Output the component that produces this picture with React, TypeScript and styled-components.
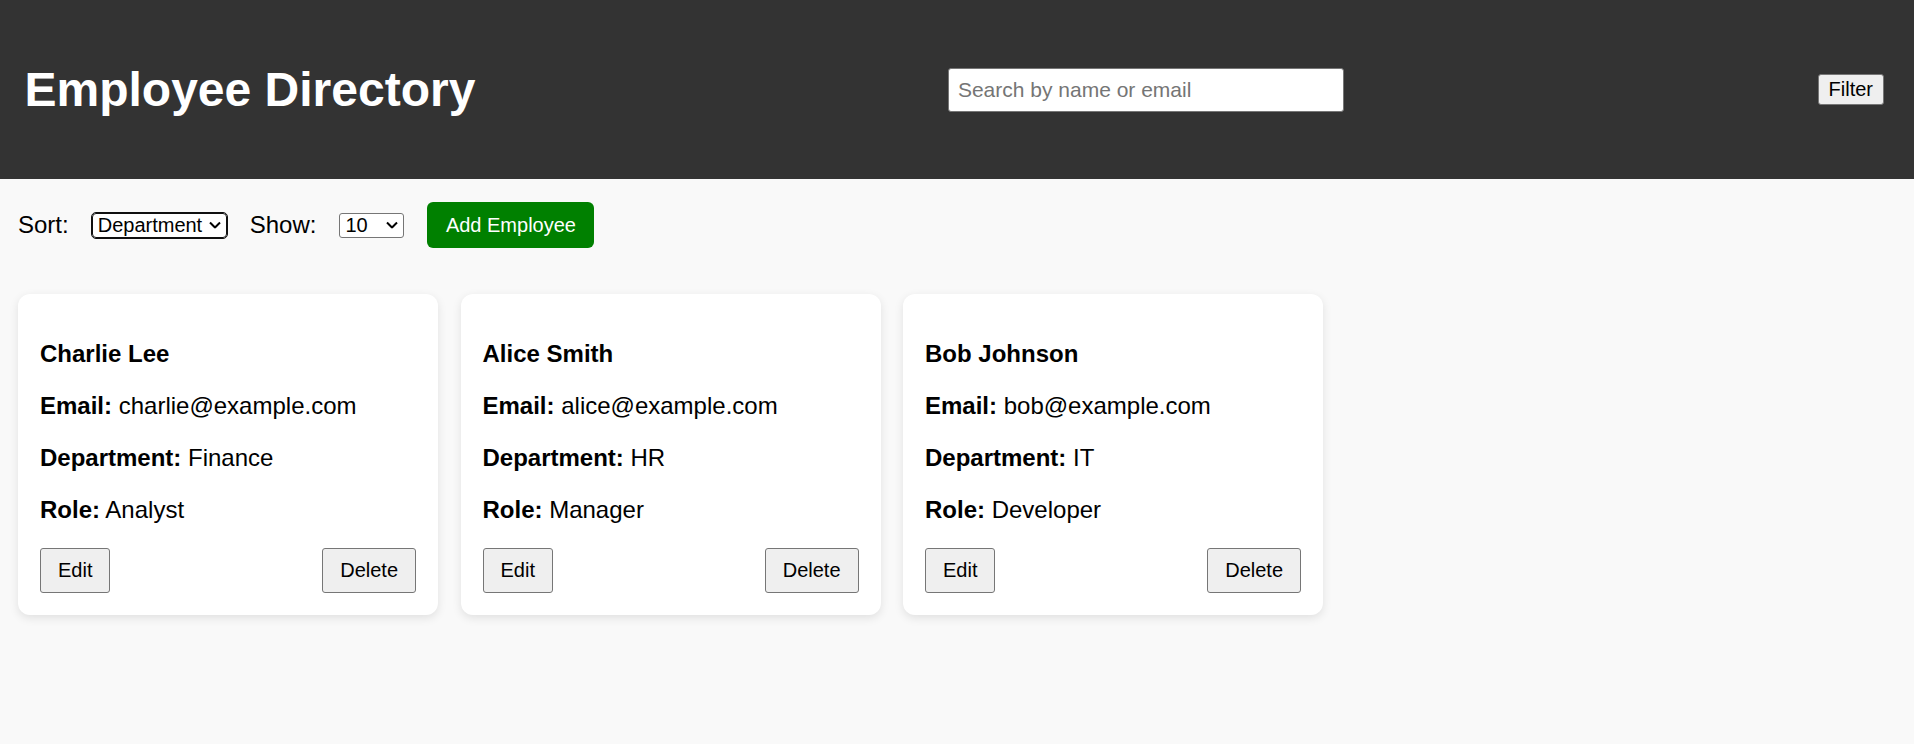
import React from "react";
import styled, { createGlobalStyle, css } from "styled-components";

const GlobalStyle = createGlobalStyle`
  html, body {
    margin: 0;
    padding: 0;
    background: #f9f9f9;
    font-family: "Liberation Sans", Arial, sans-serif;
    color: #000;
  }
`;

const Header = styled.header`
  display: flex;
  justify-content: space-between;
  align-items: center;
  background: #333333;
  padding: 30px 30px 30px 24.5px;
`;

const Title = styled.h1`
  margin: 32.16px 0;
  font-size: 48px;
  font-weight: 700;
  line-height: normal;
  color: #ffffff;
`;

const SearchInput = styled.input`
  box-sizing: border-box;
  width: 396px;
  height: 44px;
  padding: 0 8.5px;
  font-family: "Liberation Sans", Arial, sans-serif;
  font-size: 21px;
  color: #000;
  background: #fff;
  border: 1px solid #767676;
  border-radius: 3px;
  outline: none;
  &::placeholder {
    color: #757575;
  }
`;

const PlainButton = styled.button`
  font-family: "Liberation Sans", Arial, sans-serif;
  font-size: 20px;
  line-height: normal;
  color: #000;
  background: #efefef;
  border: 1px solid #767676;
  border-radius: 3px;
  cursor: pointer;
`;

const FilterButton = styled(PlainButton)`
  padding: 3px 10px;
`;

const Toolbar = styled.div`
  display: flex;
  align-items: center;
  gap: 23px;
  padding: 23px 18px;
`;

const Label = styled.span`
  font-size: 24px;
  line-height: normal;
`;

const SelectWrap = styled.div<{ $w: number }>`
  position: relative;
  width: ${(p) => p.$w}px;
  height: 25px;
`;

const Select = styled.select<{ $focused?: boolean }>`
  appearance: none;
  -webkit-appearance: none;
  box-sizing: border-box;
  width: 100%;
  height: 100%;
  margin: 0;
  padding: 0 0 0 5px;
  font-family: "Liberation Sans", Arial, sans-serif;
  font-size: 20px;
  color: #000;
  background: #fff;
  border: 1px solid #767676;
  border-radius: 3px;
  outline: none;
  ${(p) =>
    p.$focused &&
    css`
      border-color: #101010;
      outline: 1px solid #101010;
      border-radius: 4px;
    `}
`;

const Chevron = styled.svg`
  position: absolute;
  right: 6px;
  top: 50%;
  transform: translateY(-50%);
  pointer-events: none;
`;

const AddButton = styled.button`
  font-family: "Liberation Sans", Arial, sans-serif;
  font-size: 20px;
  line-height: normal;
  color: #fff;
  background: #008000;
  border: none;
  border-radius: 6px;
  padding: 11.5px 18.5px;
  cursor: pointer;
`;

const CardGrid = styled.div`
  display: flex;
  flex-wrap: wrap;
  gap: 22.5px;
  padding: 23px 18px;
`;

const Card = styled.div`
  box-sizing: border-box;
  width: 420px;
  background: #fff;
  border-radius: 12px;
  padding: 22px;
  box-shadow: 0 3px 10px rgba(0, 0, 0, 0.1);
`;

const CardLine = styled.p<{ $bold?: boolean }>`
  margin: 24px 0;
  font-size: 24px;
  line-height: normal;
  font-weight: ${(p) => (p.$bold ? 700 : 400)};
`;

const ButtonRow = styled.div`
  display: flex;
  justify-content: space-between;
`;

const CardButton = styled(PlainButton)`
  padding: 10px 17px;
`;

const ChevronIcon = () => (
  <Chevron width="12" height="7" viewBox="0 0 12 7">
    <polyline points="1,1 6,6 11,1" fill="none" stroke="#000" strokeWidth="2" />
  </Chevron>
);

const employees = [
  { name: "Charlie Lee", email: "charlie@example.com", department: "Finance", role: "Analyst" },
  { name: "Alice Smith", email: "alice@example.com", department: "HR", role: "Manager" },
  { name: "Bob Johnson", email: "bob@example.com", department: "IT", role: "Developer" },
];

export default function App() {
  return (
    <>
      <GlobalStyle />
      <Header>
        <Title>Employee Directory</Title>
        <SearchInput placeholder="Search by name or email" />
        <FilterButton>Filter</FilterButton>
      </Header>
      <Toolbar>
        <Label>Sort:</Label>
        <SelectWrap $w={135}>
          <Select $focused defaultValue="department">
            <option value="name">Name</option>
            <option value="department">Department</option>
            <option value="role">Role</option>
          </Select>
          <ChevronIcon />
        </SelectWrap>
        <Label>Show:</Label>
        <SelectWrap $w={65}>
          <Select defaultValue="10">
            <option value="10">10</option>
            <option value="25">25</option>
            <option value="100">100</option>
          </Select>
          <ChevronIcon />
        </SelectWrap>
        <AddButton>Add Employee</AddButton>
      </Toolbar>
      <CardGrid>
        {employees.map((e) => (
          <Card key={e.email}>
            <CardLine $bold>{e.name}</CardLine>
            <CardLine>
              <strong>Email:</strong> {e.email}
            </CardLine>
            <CardLine>
              <strong>Department:</strong> {e.department}
            </CardLine>
            <CardLine>
              <strong>Role:</strong> {e.role}
            </CardLine>
            <ButtonRow>
              <CardButton>Edit</CardButton>
              <CardButton>Delete</CardButton>
            </ButtonRow>
          </Card>
        ))}
      </CardGrid>
    </>
  );
}
